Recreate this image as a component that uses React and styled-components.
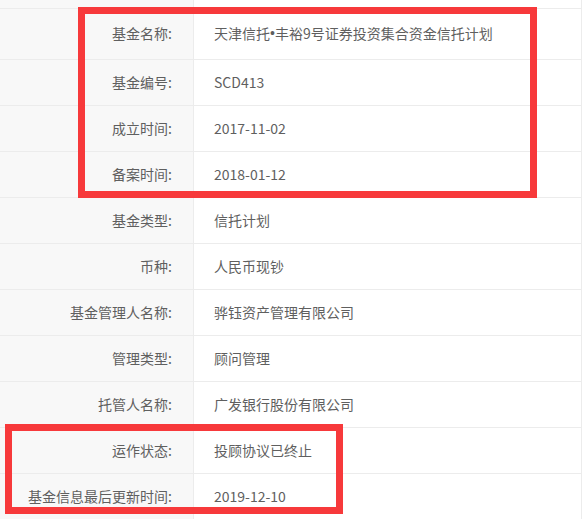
import styled, { createGlobalStyle } from "styled-components";

const GlobalStyle = createGlobalStyle`
  body {
    margin: 0;
    background: #fff;
    font-family: "Noto Sans CJK SC", "Liberation Sans", sans-serif;
  }
`;

const SPagina = styled.div`
  position: relative;
  width: 582px;
  height: 519px;
  overflow: hidden;
`;

/* Tabela de informações do fundo */
const STabela = styled.div`
  display: grid;
  grid-template-columns: 194px 1fr;
  width: 582px;
`;

const SRotulo = styled.div`
  box-sizing: border-box;
  height: ${(p) => p.$altura}px;
  padding-right: 21px;
  padding-bottom: 2px;
  background: #f8f8f8;
  border-right: 1px solid #ececec;
  border-bottom: 1px solid #ececec;
  display: flex;
  align-items: center;
  justify-content: flex-end;
  font-size: 14px;
  color: #5f5f5f;
`;

const SValor = styled.div`
  box-sizing: border-box;
  height: ${(p) => p.$altura}px;
  padding-left: 20px;
  padding-bottom: 2px;
  background: #fff;
  border-right: 1px solid #ececec;
  border-bottom: 1px solid #ececec;
  display: flex;
  align-items: center;
  font-size: 14px;
  color: #5f5f5f;
  white-space: nowrap;
`;

/* Ponto estreito entre os nomes */
const SPonto = styled.span`
  font-family: "Liberation Sans", sans-serif;
`;

/* Moldura vermelha de destaque sobre a tabela */
const SDestaque = styled.div`
  position: absolute;
  left: ${(p) => p.$x}px;
  top: ${(p) => p.$y}px;
  width: ${(p) => p.$w}px;
  height: ${(p) => p.$h}px;
  box-sizing: border-box;
  border: 7px solid #f7393b;
  pointer-events: none;
`;

const linhas = [
  ["", "", 9],
  [
    "基金名称:",
    <>
      天津信托<SPonto>•</SPonto>丰裕9号证券投资集合资金信托计划
    </>,
    51,
  ],
  ["基金编号:", "SCD413", 46],
  ["成立时间:", "2017-11-02", 46],
  ["备案时间:", "2018-01-12", 46],
  ["基金类型:", "信托计划", 46],
  ["币种:", "人民币现钞", 46],
  ["基金管理人名称:", "骅钰资产管理有限公司", 46],
  ["管理类型:", "顾问管理", 46],
  ["托管人名称:", "广发银行股份有限公司", 46],
  ["运作状态:", "投顾协议已终止", 46],
  ["基金信息最后更新时间:", "2019-12-10", 46],
  ["", "", 46],
];

export default function App() {
  return (
    <SPagina>
      <GlobalStyle />
      <STabela>
        {linhas.map(([rotulo, valor, altura], i) => [
          <SRotulo key={`r${i}`} $altura={altura}>
            {rotulo}
          </SRotulo>,
          <SValor key={`v${i}`} $altura={altura}>
            {valor}
          </SValor>,
        ])}
      </STabela>
      <SDestaque $x={78} $y={7} $w={459} $h={191} />
      <SDestaque $x={5} $y={424} $w={338} $h={90} />
    </SPagina>
  );
}
